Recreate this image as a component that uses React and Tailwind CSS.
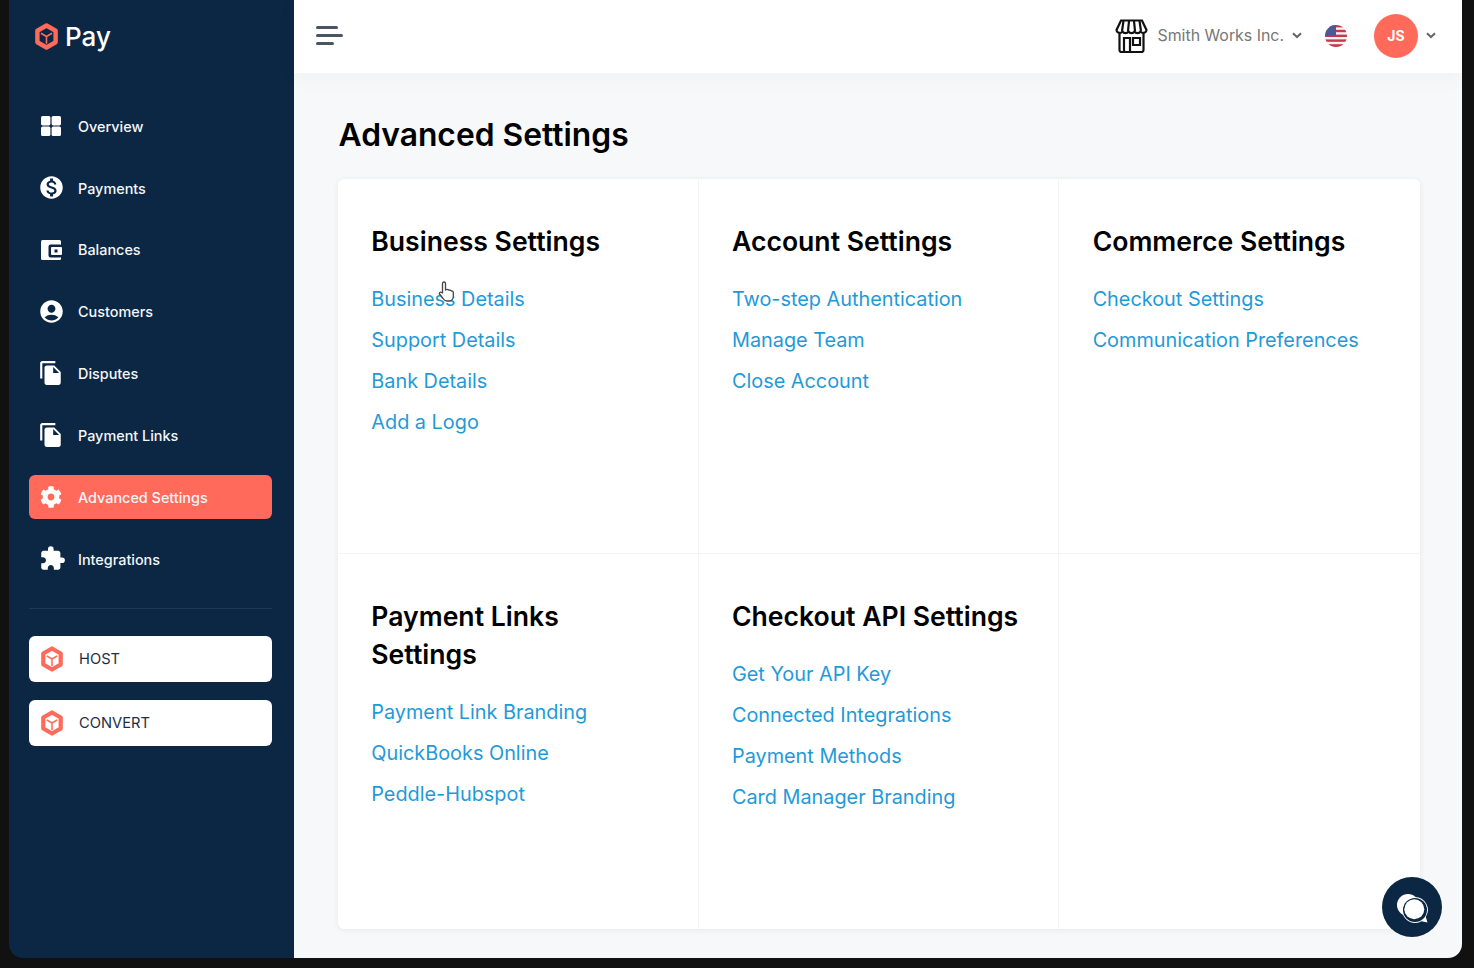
import React from 'react';
import { FaCog } from 'react-icons/fa';
import { MdAccountCircle, MdExtension, MdFileCopy, MdMonetizationOn } from 'react-icons/md';

function BoxLogo({ width, height, inner }) {
    return (
        <svg width={width} height={height} viewBox="0 0 24 28" fill="none">
            <path d="M12 2.500 21.500 8v12L12 25.500 2.500 20V8z" fill={inner} stroke="#ff6a5b" strokeWidth="4.600" strokeLinejoin="round" />
            <path d="M6.200 10.600 12 14l5.800-3.400M12 14v7.500" stroke="#ff6a5b" strokeWidth="1.700" />
        </svg>
    );
}

const icons = {
    overview: (
        <svg width="22" height="22" viewBox="0 0 22 22" fill="#fff">
            <rect x="1" y="1" width="9.400" height="9.400" rx="1.600" />
            <rect x="11.600" y="1" width="9.400" height="9.400" rx="1.600" />
            <rect x="1" y="11.600" width="9.400" height="9.400" rx="1.600" />
            <rect x="11.600" y="11.600" width="9.400" height="9.400" rx="1.600" />
        </svg>
    ),
    payments: <MdMonetizationOn size={27} color="#fff" className="shrink-0" />,
    balances: (
        <svg width="22" height="22" viewBox="0 0 22 22">
            <rect x="1" y="1" width="20" height="20" rx="1.500" fill="#fff" />
            <rect x="8.500" y="5.500" width="13.500" height="13" rx="2" fill="#0b2744" />
            <rect x="11" y="8" width="11" height="8" rx="1" fill="#fff" />
            <rect x="14.500" y="10.500" width="3" height="3" fill="#0b2744" />
        </svg>
    ),
    customers: <MdAccountCircle size={27} color="#fff" className="shrink-0" />,
    docs: <MdFileCopy size={26} color="#fff" className="shrink-0" />,
    gear: <FaCog size={22} color="#fff" className="shrink-0" />,
    puzzle: <MdExtension size={27} color="#fff" className="ml-[3px] shrink-0" />,
};

const navItems = [
    { label: 'Overview', icon: icons.overview },
    { label: 'Payments', icon: icons.payments },
    { label: 'Balances', icon: icons.balances },
    { label: 'Customers', icon: icons.customers },
    { label: 'Disputes', icon: icons.docs },
    { label: 'Payment Links', icon: icons.docs },
    { label: 'Advanced Settings', icon: icons.gear, active: true },
    { label: 'Integrations', icon: icons.puzzle },
];

const sections = [
    { title: 'Business Settings', links: ['Business Details', 'Support Details', 'Bank Details', 'Add a Logo'] },
    { title: 'Account Settings', links: ['Two-step Authentication', 'Manage Team', 'Close Account'] },
    { title: 'Commerce Settings', links: ['Checkout Settings', 'Communication Preferences'] },
    { title: 'Payment Links Settings', links: ['Payment Link Branding', 'QuickBooks Online', 'Peddle-Hubspot'] },
    { title: 'Checkout API Settings', links: ['Get Your API Key', 'Connected Integrations', 'Payment Methods', 'Card Manager Branding'] },
    { title: '', links: [] },
];

function NavItem({ label, icon, active }) {
    return (
        <div className={`flex h-[44px] items-center rounded-[6px] pl-[11px] ${active ? 'bg-[#ff6a5b]' : ''}`}>
            <span className="flex w-[22px] shrink-0 items-center justify-center">{icon}</span>
            <span className="ml-[16px] pt-[1px] text-[14.400px] font-medium text-[#f4f6f8]">{label}</span>
        </div>
    );
}

function ProductButton({ label }) {
    return (
        <div className="flex h-[46px] items-center rounded-[6px] bg-white pl-[12px]">
            <BoxLogo width={22} height={26} inner="#fff" />
            <span className="ml-[16px] text-[14.700px] text-[#1c2f47]">{label}</span>
        </div>
    );
}

function Chevron() {
    return (
        <svg width="10" height="7" viewBox="0 0 10 7" fill="none">
            <path d="M1 1.200 5 5l4-3.800" stroke="#666" strokeWidth="2" />
        </svg>
    );
}

function StoreIcon() {
    return (
        <svg width="33" height="34" viewBox="0 0 33 34" fill="none" stroke="#111" strokeWidth="2.200">
            <path d="M6 1.500h21l4.500 9.500a3.300 3.300 0 0 1-6 1.500 3.500 3.500 0 0 1-6 0 3.500 3.500 0 0 1-6 0 3.500 3.500 0 0 1-6 0 3.300 3.300 0 0 1-6-1.500z" />
            <path d="M8.500 2 7 12M14 2l-1 10M19 2l1 10M24.500 2l1.500 10" />
            <path d="M4.500 15v16a2 2 0 0 0 2 2h20a2 2 0 0 0 2-2V15" />
            <path d="M9 33V19h6v14M18 19h7v7h-7z" />
        </svg>
    );
}

function FlagIcon() {
    return (
        <svg width="22" height="22" viewBox="0 0 22 22">
            <defs>
                <clipPath id="flag-clip">
                    <circle cx="11" cy="11" r="11" />
                </clipPath>
            </defs>
            <g clipPath="url(#flag-clip)">
                <rect width="22" height="22" fill="#f4f0f0" />
                <rect y="0" width="22" height="2.400" fill="#c8374a" />
                <rect y="4.800" width="22" height="2.400" fill="#c8374a" />
                <rect y="9.600" width="22" height="2.400" fill="#c8374a" />
                <rect y="14.400" width="22" height="2.400" fill="#c8374a" />
                <rect y="19.200" width="22" height="2.800" fill="#c8374a" />
                <rect width="11" height="10.800" fill="#4a5a96" />
            </g>
        </svg>
    );
}

function ChatIcon() {
    return (
        <svg width="32" height="32" viewBox="0 0 32 32">
            <circle cx="12" cy="14" r="11" fill="#fff" />
            <path d="M19 6a13 13 0 1 0 6.500 24.300L31.500 31.500 29.800 26A13 13 0 0 0 19 6z" fill="#fff" />
            <circle cx="19" cy="19" r="12" fill="#0b2744" />
            <circle cx="18.300" cy="18.300" r="10" fill="#fff" />
        </svg>
    );
}

function HandCursor() {
    return (
        <svg width="17" height="22" viewBox="0 0 17 22" fill="#fff" stroke="#444" strokeWidth="1.300" strokeLinejoin="round">
            <path d="M4.500 12V2.500a1.500 1.500 0 0 1 3 0V9l1-.5c1-.3 1.500 0 2 .5l1 .2c1-.3 1.500.2 1.800.8 1.200-.2 2 .5 2 1.500v4c0 2.500-1.800 4.500-4.500 4.500H9c-2 0-3-1-4-2.500L1.500 13c-.8-1.200.8-2.500 2-1.500z" />
        </svg>
    );
}

function SettingsCell({ title, links, index }) {
    return (
        <div className={`h-[375px] pl-[33.300px] pr-[30px] pt-[43px] ${index % 3 !== 2 ? 'border-r border-[#f3f4f6]' : ''} ${index < 3 ? 'border-b border-[#f3f4f6]' : ''}`}>
            {title ? <h2 className="text-[26.600px] font-semibold leading-[38px] text-black">{title}</h2> : null}
            <div className="mt-[19px] flex flex-col">
                {links.map((link) => (
                    <a key={link} className="h-[41px] text-[19.850px] leading-[41px] text-[#1f9ad9]">
                        {link}
                    </a>
                ))}
            </div>
        </div>
    );
}

export default function App() {
    return (
        <div className="h-[968px] w-[1474px] overflow-hidden bg-[#111111] pb-[10px] pl-[9px] pr-[12px] font-['Inter',sans-serif]">
            <div className="flex h-full overflow-hidden rounded-b-[14px]">
                <aside className="w-[285px] shrink-0 bg-[#0b2744] pl-[20px] pr-[22px]">
                    <div className="flex h-[73px] items-center pl-[6px]">
                        <BoxLogo width={23} height={27} inner="#0b2744" />
                        <span className="ml-[7px] text-[26px] font-medium text-white">Pay</span>
                    </div>
                    <nav className="mt-[31px] flex flex-col gap-[17.850px]">
                        {navItems.map((item) => (
                            <NavItem key={item.label} {...item} />
                        ))}
                    </nav>
                    <div className="mt-[27px] border-t border-[#1c3a55]" />
                    <div className="mt-[27px] flex flex-col gap-[18px]">
                        <ProductButton label="HOST" />
                        <ProductButton label="CONVERT" />
                    </div>
                </aside>

                <div className="relative flex-1 bg-[#f6f8fa]">
                    <header className="flex h-[73px] items-center bg-white pb-[2px] pl-[22px] pr-[26px] shadow-[0_4px_24px_rgba(0,0,0,0.035)]">
                        <div className="flex flex-col gap-[5px]">
                            <span className="h-[3px] w-[22px] rounded-full bg-[#4a5560]" />
                            <span className="h-[3px] w-[27px] rounded-full bg-[#4a5560]" />
                            <span className="h-[3px] w-[18px] rounded-full bg-[#4a5560]" />
                        </div>
                        <div className="ml-auto flex items-center">
                            <StoreIcon />
                            <span className="ml-[9px] text-[15.900px] text-[#777777]">Smith Works Inc.</span>
                            <span className="ml-[8px]"><Chevron /></span>
                            <span className="ml-[23px]"><FlagIcon /></span>
                            <div className="ml-[27px] flex h-[44px] w-[44px] items-center justify-center rounded-full bg-[#ff6a5b] text-[14px] font-bold text-white">JS</div>
                            <span className="ml-[8px]"><Chevron /></span>
                        </div>
                    </header>

                    <main className="pl-[44px] pr-[42px]">
                        <h1 className="ml-[0.500px] mt-[39px] text-[31.800px] font-semibold leading-[46px] text-black">Advanced Settings</h1>
                        <section className="mt-[21px] grid w-[1082px] grid-cols-3 rounded-[6px] bg-white shadow-[0_1px_6px_rgba(0,0,0,0.07)]">
                            {sections.map((section, index) => (
                                <SettingsCell key={index} index={index} {...section} />
                            ))}
                        </section>
                    </main>

                    <span className="absolute left-[144px] top-[281px]"><HandCursor /></span>
                    <button type="button" className="absolute left-[1088px] top-[877px] flex h-[60px] w-[60px] items-center justify-center rounded-full bg-[#0b2744]">
                        <ChatIcon />
                    </button>
                </div>
            </div>
        </div>
    );
}
